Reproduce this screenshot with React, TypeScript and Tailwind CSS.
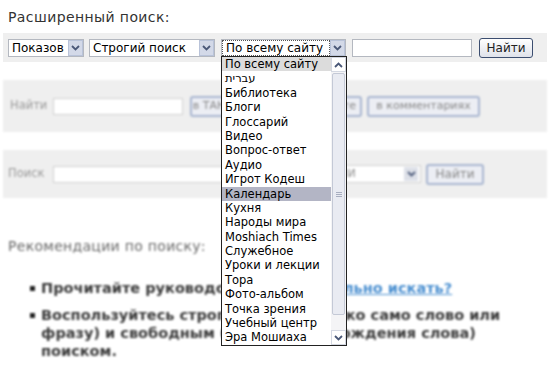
import React from "react";

const items = [
  "По всему сайту",
  "עברית",
  "Библиотека",
  "Блоги",
  "Глоссарий",
  "Видео",
  "Вопрос-ответ",
  "Аудио",
  "Игрот Кодеш",
  "Календарь",
  "Кухня",
  "Народы мира",
  "Moshiach Times",
  "Служебное",
  "Уроки и лекции",
  "Тора",
  "Фото-альбом",
  "Точка зрения",
  "Учебный центр",
  "Эра Мошиаха",
];

function Chevron({ up = false }: { up?: boolean }) {
  return (
    <svg width="9" height="6" viewBox="0 0 9 6" className="block">
      <polyline
        points={up ? "1,5 4.5,1.5 8,5" : "1,1 4.5,4.5 8,1"}
        fill="none"
        stroke="#4a5878"
        strokeWidth="1.8"
      />
    </svg>
  );
}

function ArrowBox() {
  return (
    <div className="flex h-[16px] w-[15px] shrink-0 items-center justify-center border border-[#b9c3d9] bg-[#d3d9e8]">
      <Chevron />
    </div>
  );
}

function Select({
  text,
  className,
  focused = false,
}: {
  text: string;
  className: string;
  focused?: boolean;
}) {
  return (
    <div
      className={`flex h-[18px] shrink-0 items-center border border-[#b4b8c0] bg-white ${className}`}
    >
      <div
        className={`flex h-full min-w-0 flex-1 items-center overflow-hidden whitespace-nowrap pl-[3px] text-[12px] leading-none text-black ${
          focused ? "border border-dotted border-[#555]" : ""
        }`}
      >
        {text}
      </div>
      <ArrowBox />
    </div>
  );
}

function Dropdown() {
  return (
    <div className="absolute left-[221px] top-[56px] flex h-[290px] w-[126px] border border-[#222] bg-white">
      <div className="flex-1">
        {items.map((it, i) => (
          <div
            key={it}
            className={`h-[14.4px] whitespace-nowrap pl-[3px] text-[11.5px] leading-[14.4px] text-black ${
              i === 0 ? "bg-[#dcdcdc]" : i === 9 ? "bg-[#b3b5c5]" : ""
            }`}
          >
            {it}
          </div>
        ))}
      </div>
      <div className="flex w-[15px] flex-col bg-[#f4f4f6]">
        <div className="flex h-[15px] items-center justify-center border border-[#d4d8e2] bg-white">
          <Chevron up />
        </div>
        <div className="mx-[1px] mt-[1px] flex h-[242px] items-center justify-center rounded-[2px] border border-[#c4c9d6] bg-[#e9ebf2]">
          <div className="flex flex-col gap-[1px]">
            <div className="h-px w-[6px] bg-[#a8aec0]" />
            <div className="h-px w-[6px] bg-[#a8aec0]" />
            <div className="h-px w-[6px] bg-[#a8aec0]" />
          </div>
        </div>
        <div className="flex-1" />
        <div className="flex h-[15px] items-center justify-center border border-[#d4d8e2] bg-white">
          <Chevron />
        </div>
      </div>
    </div>
  );
}

function SoftButton({ children, className }: { children: React.ReactNode; className: string }) {
  return (
    <div
      className={`flex h-[21px] shrink-0 items-center justify-center whitespace-nowrap rounded-[3px] border-2 border-[#a9b6d0] bg-[#eceef4] text-[#888] ${className}`}
    >
      {children}
    </div>
  );
}

export default function App() {
  return (
    <div className="relative h-[367px] w-[550px] overflow-hidden bg-white font-['DejaVu_Sans',sans-serif]">
      <div className="pl-[8px] pt-[9px] text-[14px] leading-[16px] tracking-[0.4px] text-[#333]">
        Расширенный поиск:
      </div>

      <div className="mx-[3px] mt-[8px] flex h-[29px] items-center bg-[#efefef] pl-[5px]">
        <Select text="Показов" className="w-[76px]" />
        <Select text="Строгий поиск" className="ml-[5px] w-[126px]" />
        <Select text="По всему сайту" className="ml-[6px] w-[125px]" focused />
        <div className="ml-[6px] h-[18px] w-[120px] border border-[#b4b8c0] bg-white" />
        <div className="ml-[7px] flex h-[20px] w-[54px] items-center justify-center rounded-[3px] border border-[#3c4e70] bg-gradient-to-b from-white to-[#dfe2ea] text-[12px] text-[#222]">
          Найти
        </div>
      </div>

      <div className="blur-[0.9px]">
        <div className="mx-[3px] mt-[18px] flex h-[52px] items-center bg-[#efefef] pl-[7px]">
          <span className="w-[43px] text-[11.5px] text-[#999]">Найти</span>
          <div className="h-[17px] w-[130px] border border-[#d0d0d0] bg-white" />
          <SoftButton className="ml-[7px] w-[60px] text-[11px]">в ТАНАХе</SoftButton>
          <SoftButton className="ml-[4px] w-[108px] justify-end pr-[4px] text-[11px]">
            в Хасидуте
          </SoftButton>
          <SoftButton className="ml-[5px] w-[113px] text-[11px]">в комментариях</SoftButton>
        </div>

        <div className="mx-[3px] mt-[18px] flex h-[48px] items-center bg-[#efefef] pl-[5px]">
          <span className="w-[45px] text-[11.5px] text-[#999]">Поиск</span>
          <div className="h-[17px] w-[234px] border border-[#d0d0d0] bg-white" />
          <div className="ml-[6px] flex h-[18px] w-[128px] items-center border border-[#d0d0d0] bg-white pl-[3px] text-[10.5px] text-[#888]">
            <span className="flex-1 whitespace-nowrap">ВСЕ НАШИ</span>
            <div className="mr-[2px] flex h-[14px] w-[14px] items-center justify-center bg-[#dde0e8]">
              <Chevron />
            </div>
          </div>
          <SoftButton className="ml-[5px] w-[58px] text-[12px]">Найти</SoftButton>
        </div>

        <div className="pl-[8px] pt-[40px] text-[14px] leading-[16px] tracking-[0.3px] text-[#666]">
          Рекомендации по поиску:
        </div>

        <ul className="mt-[25px] pl-[30px] text-[14.5px] font-bold leading-[18px] text-[#3a3a3a]">
          <li className="flex">
            <span className="mr-[6px] mt-[7px] h-[5px] w-[5px] shrink-0 bg-[#222]" />
            <span>
              Прочитайте руководство{" "}
              <span className="text-[#4a8fd0] underline">Как правильно искать?</span>
            </span>
          </li>
          <li className="mt-[9px] flex">
            <span className="mr-[6px] mt-[7px] h-[5px] w-[5px] shrink-0 bg-[#222]" />
            <span className="whitespace-nowrap">
              Воспользуйтесь строгим (ищет только само слово или
              <br />
              фразу) и свободным (поиск всех вхождения слова)
              <br />
              поиском.
            </span>
          </li>
        </ul>
      </div>

      <Dropdown />
    </div>
  );
}
